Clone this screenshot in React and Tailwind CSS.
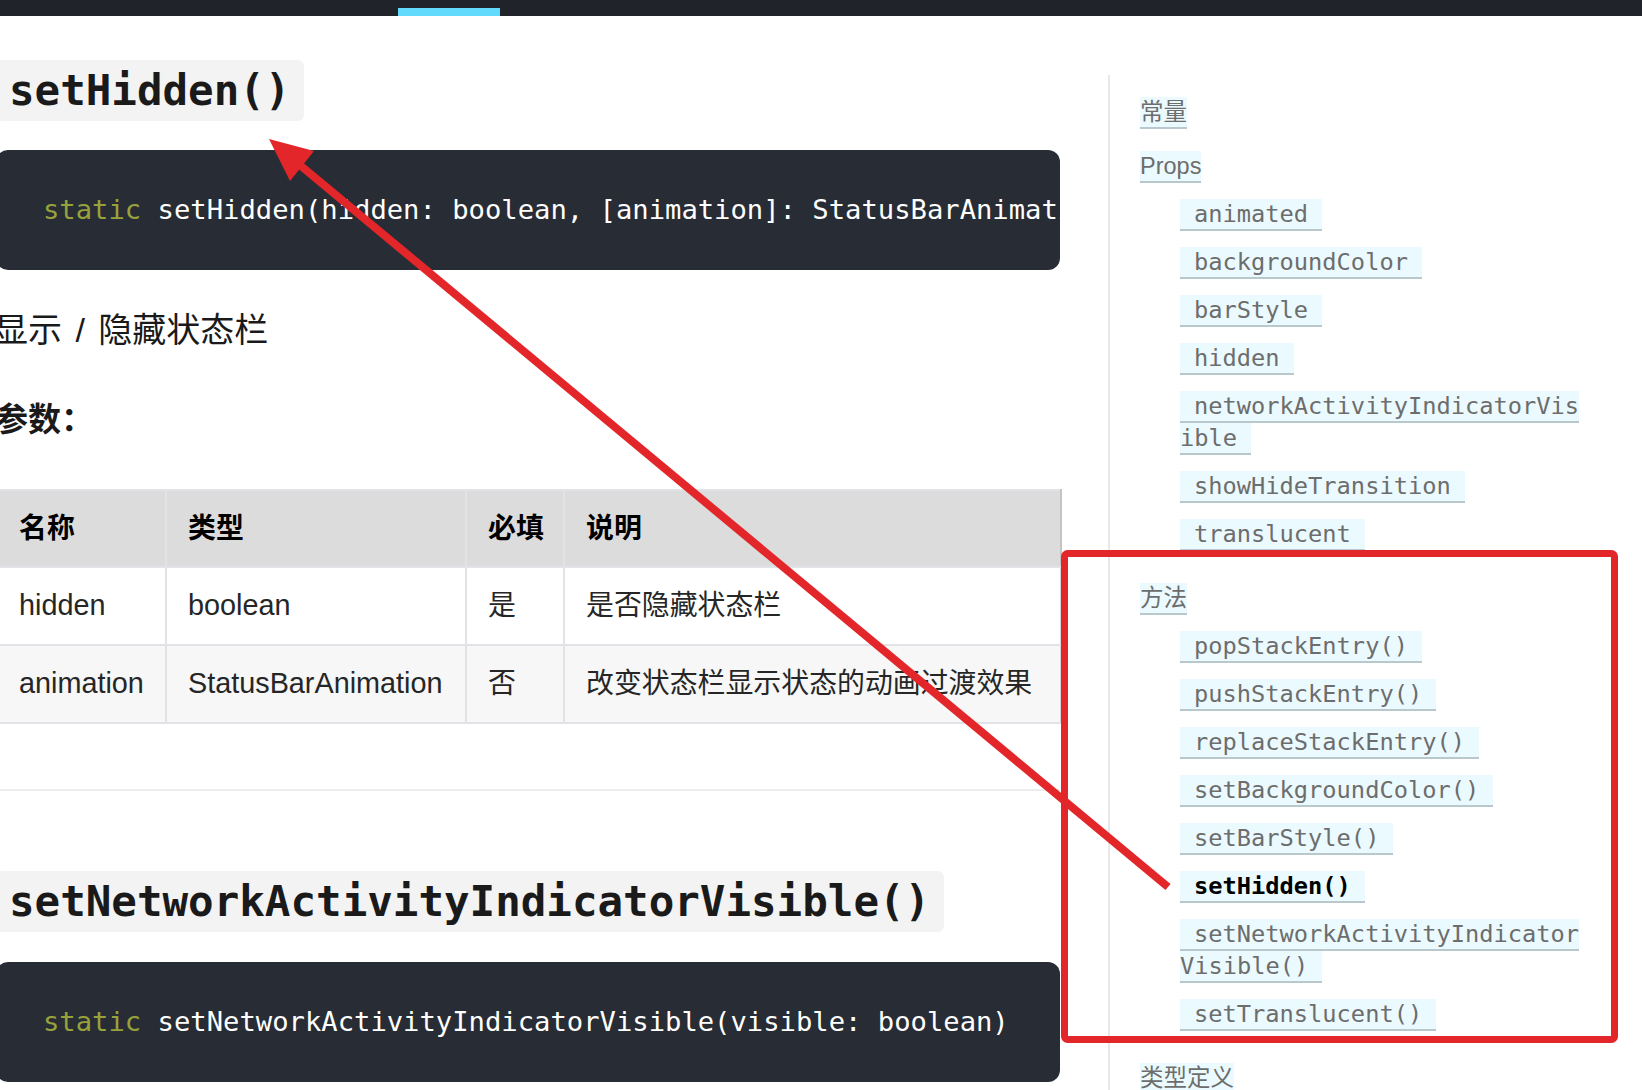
const mono = "font-['DejaVu_Sans_Mono',monospace]";
const sans = "font-['Liberation_Sans','Noto_Sans_CJK_SC',sans-serif]";

const props = [
  "animated",
  "backgroundColor",
  "barStyle",
  "hidden",
  "networkActivityIndicatorVisible",
  "showHideTransition",
  "translucent",
];

const methods = [
  "popStackEntry()",
  "pushStackEntry()",
  "replaceStackEntry()",
  "setBackgroundColor()",
  "setBarStyle()",
  "setHidden()",
  "setNetworkActivityIndicatorVisible()",
  "setTranslucent()",
];

// latin cells are set a touch larger than the CJK ones
const rows = [
  ["hidden", "boolean", "是", "是否隐藏状态栏"],
  ["animation", "StatusBarAnimation", "否", "改变状态栏显示状态的动画过渡效果"],
];

function Heading({ children }) {
  return (
    <h2
      className={`inline-block rounded-[6px] bg-[#f3f3f3] pl-[13px] pr-[14px] py-[6px] text-[42.5px] leading-[49px] font-bold text-[#1a1a1a] ${mono}`}
    >
      {children}
    </h2>
  );
}

function CodeBlock({ children }) {
  return (
    <div className="flex h-[120px] items-center overflow-hidden rounded-[12px] bg-[#282c34] pl-[47px]">
      <pre className={`whitespace-pre text-[27.2px] leading-[40px] text-white ${mono}`}>
        <span className="text-[#97a23d]">static</span> {children}
      </pre>
    </div>
  );
}

function Label({ children }) {
  return (
    <div className={`text-[23.5px] leading-[32px] text-[#6d6d6d] ${sans}`}>
      <span className="border-b-2 border-[#b9c8cc] bg-[#ebfafe] py-[2px]">{children}</span>
    </div>
  );
}

function SubLink({ name, active }) {
  return (
    <li
      className={`break-all text-[23.7px] leading-[32px] ${mono} ${
        active ? "font-bold text-black" : "text-[#6d6d6d]"
      }`}
    >
      <span className="border-b-2 border-[#b9c8cc] bg-[#ebfafe] px-[14px] py-[1px]">{name}</span>
    </li>
  );
}

function Sidebar() {
  return (
    <aside className="ml-[48px] mt-[59px] w-[478px] border-l-2 border-[#e8e8e8] pb-[40px] pl-[30px] pt-[21px]">
      <Label>常量</Label>

      <div className="mt-[22px]">
        <Label>Props</Label>
        <ul className="mt-[16px] flex w-[446px] flex-col gap-[16px] pl-[40px]">
          {props.map((p) => (
            <SubLink key={p} name={p} />
          ))}
        </ul>
      </div>

      <div className="mt-[32px]">
        <Label>方法</Label>
        <ul className="mt-[16px] flex w-[446px] flex-col gap-[16px] pl-[40px]">
          {methods.map((m) => (
            <SubLink key={m} name={m} active={m === "setHidden()"} />
          ))}
        </ul>
      </div>

      <div className="mt-[32px]">
        <Label>类型定义</Label>
      </div>
    </aside>
  );
}

function ParamTable() {
  const cell = "whitespace-nowrap border-2 border-[#e1e3e6] px-[21px] py-0 text-left align-middle";
  return (
    <table className={`mt-[45px] w-[1064px] table-fixed border-collapse ${sans}`}>
      <thead>
        <tr className="bg-[#dcdcdc] text-[27.9px] text-black">
          <th className={`${cell} h-[77px] w-[169px] font-bold`}>名称</th>
          <th className={`${cell} h-[77px] w-[300px] font-bold`}>类型</th>
          <th className={`${cell} h-[77px] w-[98px] font-bold`}>必填</th>
          <th className={`${cell} h-[77px] w-[497px] border-r-[#c4c4c4] font-bold`}>说明</th>
        </tr>
      </thead>
      <tbody>
        {rows.map((r, i) => (
          <tr key={r[0]} className={i % 2 ? "bg-[#f7f7f7]" : "bg-white"}>
            {r.map((c, j) => (
              <td
                key={j}
                className={`${cell} h-[78px] font-normal text-[#262626] ${
                  j < 2 ? "text-[28.8px]" : "text-[27.9px]"
                } ${j === 3 ? "border-r-[#d4d4d4]" : ""}`}
              >
                {c}
              </td>
            ))}
          </tr>
        ))}
      </tbody>
    </table>
  );
}

export default function App() {
  return (
    <div className="relative h-[1090px] w-[1642px] overflow-hidden bg-white">
      {/* header strip */}
      <div className="flex h-[16px] items-end bg-[#20232a] pl-[398px]">
        <div className="h-[8px] w-[102px] bg-[#61dafb]" />
      </div>

      <div className="flex items-start">
        <main className="ml-[-4px] w-[1064px] shrink-0">
          <div className="mt-[44px]">
            <Heading>setHidden()</Heading>
          </div>

          <div className="mt-[29px]">
            <CodeBlock>setHidden(hidden: boolean, [animation]: StatusBarAnimation)</CodeBlock>
          </div>

          <p className={`ml-[-2px] mt-[36px] text-[34px] leading-[48px] text-[#1a1a1a] [word-spacing:4px] ${sans}`}>
            显示 / 隐藏状态栏
          </p>

          <p className={`ml-[-1px] mt-[42px] text-[33px] font-bold leading-[48px] text-[#1a1a1a] ${sans}`}>
            参数：
          </p>

          <ParamTable />

          <hr className="mt-[65px] border-0 border-t-2 border-[#ececec]" />

          <div className="mt-[80px]">
            <Heading>setNetworkActivityIndicatorVisible()</Heading>
          </div>

          <div className="mt-[30px]">
            <CodeBlock>setNetworkActivityIndicatorVisible(visible: boolean)</CodeBlock>
          </div>
        </main>

        <Sidebar />
      </div>

      {/* red annotation drawn over the screenshot */}
      <svg
        className="pointer-events-none absolute left-0 top-0"
        width="1642"
        height="1090"
        viewBox="0 0 1642 1090"
      >
        <rect x="1064.5" y="553.5" width="550" height="486" rx="3" fill="none" stroke="#e3262a" strokeWidth="7" />
        <line x1="301" y1="166" x2="1168" y2="887" stroke="#e3262a" strokeWidth="8" />
        <polygon points="269,139 314,151 290,181" fill="#e3262a" />
      </svg>
    </div>
  );
}
